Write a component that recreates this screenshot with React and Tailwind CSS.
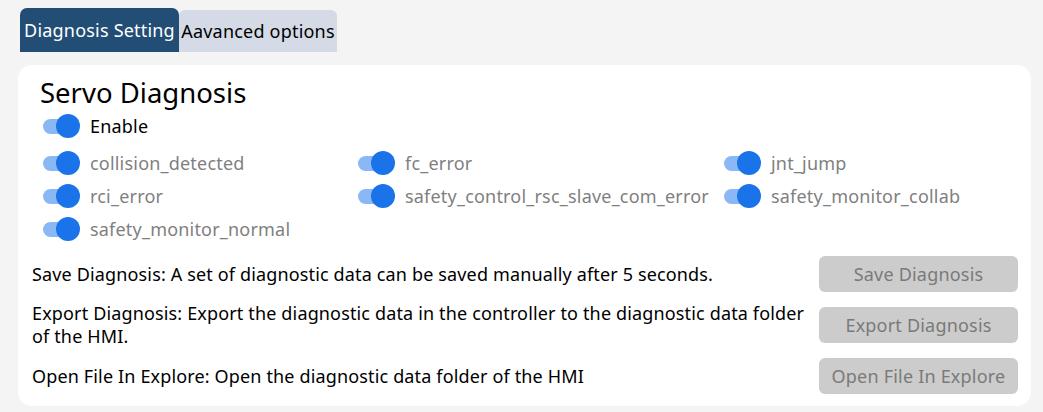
import React, { useState } from 'react';

const diagItems = [
  'collision_detected',
  'fc_error',
  'jnt_jump',
  'rci_error',
  'safety_control_rsc_slave_com_error',
  'safety_monitor_collab',
  'safety_monitor_normal'
];

const actions = [
  {
    text: 'Save Diagnosis: A set of diagnostic data can be saved manually after 5 seconds.',
    label: 'Save Diagnosis'
  },
  {
    text: 'Export Diagnosis: Export the diagnostic data in the controller to the diagnostic data folder of the HMI.',
    label: 'Export Diagnosis'
  },
  {
    text: 'Open File In Explore: Open the diagnostic data folder of the HMI',
    label: 'Open File In Explore'
  }
];

function Toggle({ on, onClick }) {
  return (
    <button
      onClick={onClick}
      className="relative w-[37px] h-6 shrink-0 flex items-center"
    >
      <span className="absolute left-0 right-[2px] h-[15px] rounded-full bg-[#8ab8f5]" />
      <span
        className={`absolute w-6 h-6 rounded-full bg-[#1a73e8] ${on ? 'right-0' : 'left-0'}`}
      />
    </button>
  );
}

export default function App() {
  const [tab, setTab] = useState(0);
  const [enabled, setEnabled] = useState(true);
  const [items, setItems] = useState(diagItems.map(() => true));

  const flip = i => {
    setItems(items.map((v, idx) => (idx === i ? !v : v)));
  };

  return (
    <div
      className="w-[1043px] h-[412px] bg-[#f4f4f4] overflow-hidden"
      style={{ fontFamily: '"Noto Sans", "Open Sans", sans-serif' }}
    >
      <div className="flex items-end pl-5 pt-2 h-[52px]">
        <button
          onClick={() => setTab(0)}
          className="h-[44px] w-[159px] rounded-t-[7px] bg-[#224e75] text-white text-[18px] tracking-[0.2px] leading-none whitespace-nowrap"
        >
          Diagnosis Setting
        </button>
        <button
          onClick={() => setTab(1)}
          className="h-[42px] w-[158px] rounded-t-[6px] bg-[#d4dbe6] text-black text-[18px] tracking-[0.2px] leading-none whitespace-nowrap"
        >
          Aavanced options
        </button>
      </div>

      <div className="ml-[18px] mr-3 mt-[13px] h-[341px] bg-white rounded-[14px] pt-[10px] pb-3">
        <div className="pl-[22px]">
          <h2 className="text-[27.5px] leading-[36px] text-black">Servo Diagnosis</h2>
          <div className="flex items-center gap-[10px] pl-[3px] mt-[3px] h-6">
            <Toggle on={enabled} onClick={() => setEnabled(!enabled)} />
            <span className="text-[18px] tracking-[0.2px] text-black">Enable</span>
          </div>
          <div className="grid grid-cols-[315px_366px_1fr] gap-y-[9px] pl-[3px] mt-[13px]">
            {diagItems.map((name, i) => (
              <div key={name} className="flex items-center gap-[10px] h-6">
                <Toggle on={items[i]} onClick={() => flip(i)} />
                <span className="text-[18px] tracking-[0.2px] text-[#7f7f7f] whitespace-nowrap">{name}</span>
              </div>
            ))}
          </div>
        </div>

        <div className="flex flex-col gap-[15px] mt-[15px] pl-[14px] pr-[13px]">
          {actions.map(a => (
            <div key={a.label} className="flex items-center justify-between h-9">
              <p className="w-[782px] text-[18px] tracking-[0.15px] leading-[23px] text-black">{a.text}</p>
              <button className="w-[199px] h-9 rounded-[6px] bg-[#cccccc] text-[#7a7a7a] text-[18px] tracking-[0.2px] whitespace-nowrap">
                {a.label}
              </button>
            </div>
          ))}
        </div>
      </div>
    </div>
  );
}
